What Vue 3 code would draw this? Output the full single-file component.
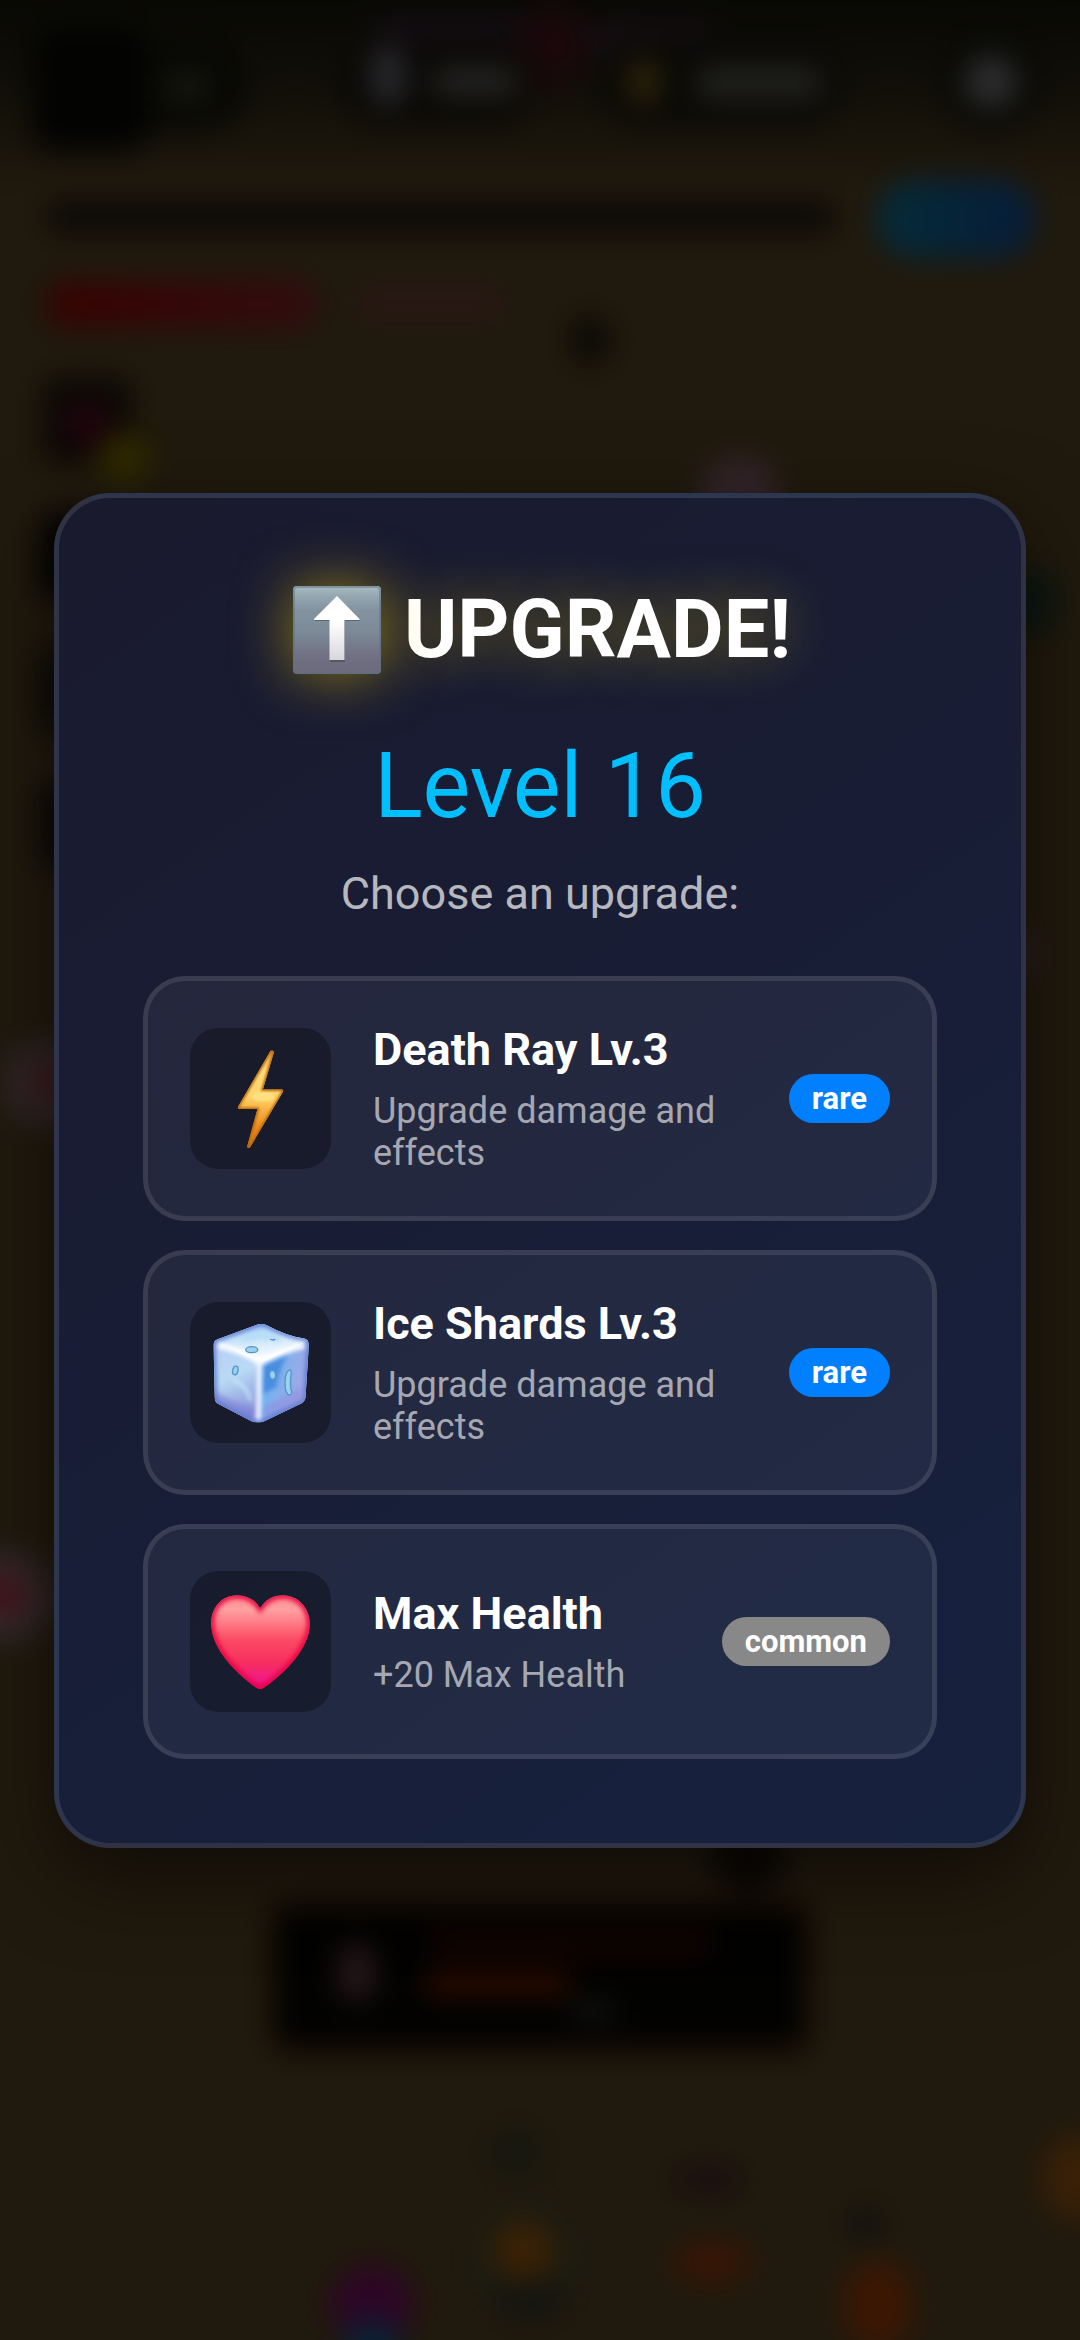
<script setup>
const level = 16

const upgrades = [
  { icon: 'bolt', name: 'Death Ray Lv.3', description: 'Upgrade damage and effects', rarity: 'rare' },
  { icon: 'ice', name: 'Ice Shards Lv.3', description: 'Upgrade damage and effects', rarity: 'rare' },
  { icon: 'heart', name: 'Max Health', description: '+20 Max Health', rarity: 'common' },
]
</script>

<template>
  <div class="screen">
    <!-- Dimmed, out-of-focus battlefield and HUD behind the dialog -->
    <svg class="battlefield" viewBox="0 0 1080 2340" preserveAspectRatio="xMidYMid slice" aria-hidden="true">
      <defs>
        <linearGradient id="topShade" x1="0" y1="0" x2="0" y2="1">
          <stop offset="0.24" stop-color="#080804" />
          <stop offset="0.6" stop-color="#110f08" />
          <stop offset="1" stop-color="#20190d" />
        </linearGradient>
        <linearGradient id="timer"><stop offset="0" stop-color="#052b38" /><stop offset="1" stop-color="#061c38" /></linearGradient>
        <linearGradient id="health"><stop offset="0" stop-color="#380101" /><stop offset="1" stop-color="#330b0e" /></linearGradient>
        <filter id="soft" filterUnits="userSpaceOnUse" x="-60" y="-60" width="1200" height="2460" color-interpolation-filters="sRGB"><feGaussianBlur stdDeviation="14" /></filter>
      </defs>
      <g filter="url(#soft)">
        <rect x="-60" y="-60" width="1200" height="2460" fill="#20190d" />
        <rect x="-60" y="-60" width="1200" height="250" fill="url(#topShade)" />
        <rect x="375" y="18" width="150" height="60" fill="#150d15" />
        <rect x="590" y="20" width="120" height="40" fill="#150e12" />
        <ellipse cx="552" cy="45" rx="36" ry="42" fill="#1a080b" />
        <rect x="90" y="38" width="158" height="94" rx="46" fill="#080804" />
        <rect x="32" y="26" width="116" height="126" rx="22" fill="#030302" />
        <rect x="168" y="74" width="38" height="26" fill="#181813" />
        <rect x="340" y="38" width="196" height="88" rx="44" fill="#0a0805" />
        <ellipse cx="388" cy="76" rx="20" ry="32" fill="#26262a" />
        <rect x="434" y="66" width="82" height="32" fill="#222220" />
        <rect x="598" y="38" width="246" height="88" rx="44" fill="#0a0906" />
        <ellipse cx="644" cy="82" rx="17" ry="23" fill="#2e240b" />
        <rect x="698" y="66" width="122" height="34" fill="#20201c" />
        <circle cx="991" cy="82" r="50" fill="#090906" />
        <circle cx="991" cy="82" r="27" fill="#2c2c2d" />
        <rect x="46" y="200" width="790" height="34" rx="16" fill="#0c0a06" />
        <rect x="876" y="180" width="160" height="78" rx="38" fill="url(#timer)" />
        <rect x="48" y="282" width="266" height="44" rx="14" fill="url(#health)" />
        <rect x="362" y="286" width="136" height="32" fill="#291714" />
        <ellipse cx="590" cy="340" rx="20" ry="24" fill="#0a0a05" />
        <rect x="42" y="376" width="90" height="88" rx="20" fill="#0a0904" />
        <circle cx="86" cy="424" r="26" fill="#1d040d" />
        <circle cx="124" cy="458" r="26" fill="#2f2900" />
        <rect x="40" y="512" width="90" height="88" rx="20" fill="#040302" />
        <rect x="40" y="646" width="90" height="88" rx="20" fill="#0b0b06" />
        <rect x="40" y="782" width="90" height="88" rx="20" fill="#0a0908" />
        <circle cx="740" cy="496" r="40" fill="#332429" />
        <ellipse cx="1032" cy="602" rx="26" ry="34" fill="#0c1710" />
        <circle cx="1008" cy="952" r="30" fill="#2d1d1d" />
        <circle cx="45" cy="1083" r="44" fill="#302427" />
        <circle cx="50" cy="1081" r="16" fill="#3c1414" />
        <circle cx="5" cy="1597" r="46" fill="#34282c" />
        <circle cx="5" cy="1595" r="20" fill="#471118" />
        <ellipse cx="748" cy="1858" rx="38" ry="34" fill="#0b0704" />
        <rect x="270" y="1898" width="542" height="156" rx="20" fill="#1a0b03" />
        <rect x="276" y="1908" width="528" height="138" rx="14" fill="#020201" />
        <ellipse cx="357" cy="1972" rx="20" ry="30" fill="#26171a" />
        <rect x="430" y="1932" width="280" height="24" fill="#140500" />
        <rect x="426" y="1972" width="144" height="24" fill="#2c0b00" />
        <rect x="574" y="2002" width="40" height="18" fill="#141414" />
        <ellipse cx="515" cy="2152" rx="26" ry="24" fill="#15180f" />
        <ellipse cx="526" cy="2258" rx="58" ry="62" fill="#1b1b11" />
        <ellipse cx="530" cy="2300" rx="36" ry="18" fill="#131410" />
        <ellipse cx="524" cy="2250" rx="32" ry="30" fill="#3a2105" />
        <ellipse cx="708" cy="2180" rx="36" ry="14" fill="#190e10" />
        <ellipse cx="712" cy="2262" rx="38" ry="19" fill="#3a1504" />
        <ellipse cx="866" cy="2224" rx="18" ry="14" fill="#0f1110" />
        <ellipse cx="878" cy="2305" rx="34" ry="46" fill="#3b1703" />
        <ellipse cx="1078" cy="2178" rx="36" ry="42" fill="#392007" />
        <ellipse cx="372" cy="2306" rx="42" ry="42" fill="#2d0625" />
        <ellipse cx="372" cy="2344" rx="28" ry="26" fill="#0a2035" />
      </g>
    </svg>

    <main class="dialog" role="dialog" aria-labelledby="dialog-title">
      <h1 id="dialog-title" class="title">
        <svg class="title-icon" viewBox="0 0 96 96" aria-hidden="true">
          <defs>
            <linearGradient id="key" x1="0" y1="0" x2="0" y2="1">
              <stop offset="0" stop-color="#a9bcc3" />
              <stop offset="0.12" stop-color="#94a6b0" />
              <stop offset="0.28" stop-color="#82939f" />
              <stop offset="0.5" stop-color="#7d8b98" />
              <stop offset="0.82" stop-color="#716f82" />
              <stop offset="1" stop-color="#6b6b7d" />
            </linearGradient>
            <linearGradient id="arrow" x1="0" y1="0" x2="0" y2="1">
              <stop offset="0.4" stop-color="#ffffff" />
              <stop offset="1" stop-color="#d8d8dc" />
            </linearGradient>
          </defs>
          <rect x="4" y="4" width="88" height="88" rx="4" fill="url(#key)" />
          <rect x="5" y="5" width="86" height="86" rx="4" fill="none" stroke="#596f80" stroke-opacity="0.5" stroke-width="2" />
          <path d="M48 16 L71 39 H56 V80 H41 V39 H25 Z" fill="#3f4453" fill-opacity="0.55" />
          <path d="M48 14 L70.500 37 V38 H55.500 V78 H40.500 V38 H25 V37 Z" fill="url(#arrow)" />
        </svg>
        <span>UPGRADE!</span>
      </h1>
      <p class="level">Level {{ level }}</p>
      <p class="prompt">Choose an upgrade:</p>

      <div class="options">
        <button v-for="upgrade in upgrades" :key="upgrade.name" type="button" class="option">
          <span class="option-icon">
            <svg v-if="upgrade.icon === 'bolt'" viewBox="33 24 420 420" aria-hidden="true">
              <defs>
                <linearGradient id="boltFill" gradientUnits="userSpaceOnUse" x1="250" y1="90" x2="235" y2="383">
                  <stop offset="0" stop-color="#f5b04a" />
                  <stop offset="0.2" stop-color="#ffdb78" />
                  <stop offset="0.48" stop-color="#ffd369" />
                  <stop offset="0.64" stop-color="#f5a93a" />
                  <stop offset="0.8" stop-color="#e8861c" />
                  <stop offset="1" stop-color="#d8790f" />
                </linearGradient>
                <clipPath id="boltClip"><path d="M273 92 Q281 88 283 96 L250 207 H307 Q313 208 310 214 L213 378 Q207 386 203 378 L234 265 H179 Q173 264 177 257 Z" /></clipPath>
                <filter id="boltSoft" color-interpolation-filters="sRGB"><feGaussianBlur stdDeviation="3" /></filter>
              </defs>
              <g clip-path="url(#boltClip)">
                <rect x="170" y="80" width="150" height="310" fill="url(#boltFill)" />
                <ellipse cx="250" cy="228" rx="34" ry="15" fill="#ffe68c" fill-opacity="0.7" filter="url(#boltSoft)" />
                <path d="M273 92 Q281 88 283 96 L250 207 H307 Q313 208 310 214 L213 378 Q207 386 203 378 L234 265 H179 Q173 264 177 257 Z" fill="none" stroke="#b9680a" stroke-width="9" filter="url(#boltSoft)" />
              </g>
            </svg>

            <svg v-else-if="upgrade.icon === 'ice'" viewBox="33 36 420 420" aria-hidden="true">
              <defs>
                <linearGradient id="iceTop" x1="0" y1="0" x2="0.3" y2="1">
                  <stop offset="0" stop-color="#8fc0f2" />
                  <stop offset="0.45" stop-color="#c4e2fa" />
                  <stop offset="1" stop-color="#ffffff" />
                </linearGradient>
                <linearGradient id="iceLeft" x1="0" y1="0" x2="0.3" y2="1">
                  <stop offset="0" stop-color="#b8cdf8" />
                  <stop offset="0.5" stop-color="#b9daf4" />
                  <stop offset="1" stop-color="#8892dc" />
                </linearGradient>
                <linearGradient id="iceRight" x1="0" y1="0" x2="1" y2="0.4">
                  <stop offset="0" stop-color="#5fa4ea" />
                  <stop offset="0.4" stop-color="#79b1ee" />
                  <stop offset="1" stop-color="#a5a8e6" />
                </linearGradient>
                <clipPath id="iceClip"><path d="M228 105 Q245 98 262 105 Q320 137 374 145 Q387 149 387 164 L377 320 Q376 332 364 338 L254 391 Q235 399 216 391 L118 340 Q107 334 107 322 L103 165 Q103 152 115 147 Z" /></clipPath>
                <filter id="iceSoft" x="-30%" y="-30%" width="160%" height="160%" color-interpolation-filters="sRGB"><feGaussianBlur stdDeviation="7" /></filter>
              </defs>
              <g clip-path="url(#iceClip)">
                <rect x="98" y="96" width="294" height="304" fill="#a9cdf4" />
                <path d="M245 98 L390 150 L244 218 L100 152 Z" fill="url(#iceTop)" />
                <path d="M98 155 L244 215 L236 400 L98 340 Z" fill="url(#iceLeft)" />
                <path d="M244 218 L390 155 L380 340 L236 400 Z" fill="url(#iceRight)" />
                <g filter="url(#iceSoft)">
                  <path d="M250 225 L325 192 Q300 230 290 290 L250 310 Z" fill="#2f7bd8" fill-opacity="0.65" />
                  <path d="M250 350 L365 290 V330 L250 390 Z" fill="#8f8fe0" fill-opacity="0.6" />
                  <path d="M110 305 L235 365 V390 L110 335 Z" fill="#7d7fd6" fill-opacity="0.6" />
                  <path d="M160 270 Q200 280 214 330" fill="none" stroke="#cdeef9" stroke-width="10" stroke-opacity="0.8" />
                  <path d="M115 165 Q200 185 242 218 Q300 185 375 165" fill="none" stroke="#ffffff" stroke-width="17" />
                  <path d="M242 216 L236 390" fill="none" stroke="#f2f7ff" stroke-width="15" />
                  <path d="M190 150 Q240 125 300 150" fill="none" stroke="#b2dcf5" stroke-width="12" />
                  <path d="M228 105 Q245 98 262 105 Q320 137 374 145 Q387 149 387 164 L377 320 Q376 332 364 338 L254 391 Q235 399 216 391 L118 340 Q107 334 107 322 L103 165 Q103 152 115 147 Z" fill="none" stroke="#5a78d0" stroke-width="13" />
                </g>
              </g>
              <g fill="#9ad0f0" stroke="#5596c8" stroke-width="4">
                <ellipse cx="217" cy="178" rx="18" ry="9" />
                <ellipse cx="168" cy="240" rx="8" ry="13" transform="rotate(12 168 240)" />
                <ellipse cx="279" cy="253" rx="9" ry="13" transform="rotate(-8 279 253)" />
                <path d="M332 238 Q322 238 317 260 Q313 300 324 311 Q334 316 336 304 Q329 285 335 246 Z" />
                <path d="M272 146 Q280 152 287 146" fill="none" />
              </g>
            </svg>

            <svg v-else viewBox="33 30 420 420" aria-hidden="true">
              <defs>
                <linearGradient id="heartFill" x1="0" y1="0" x2="0" y2="1">
                  <stop offset="0" stop-color="#ff8c8e" />
                  <stop offset="0.16" stop-color="#ffa0a2" />
                  <stop offset="0.32" stop-color="#ff7580" />
                  <stop offset="0.48" stop-color="#fb4964" />
                  <stop offset="0.72" stop-color="#f72e60" />
                  <stop offset="0.9" stop-color="#f01a86" />
                  <stop offset="1" stop-color="#e80070" />
                </linearGradient>
                <clipPath id="heartClip"><path d="M242 141 Q218 102 172 102 C126 103 96 140 96 187 C97 260 165 330 231 378 Q242 386 253 378 C320 330 389 260 390 187 C389 140 356 103 311 102 Q266 102 242 141 Z" /></clipPath>
                <filter id="heartSoft" color-interpolation-filters="sRGB"><feGaussianBlur stdDeviation="8" /></filter>
              </defs>
              <g clip-path="url(#heartClip)">
                <rect x="94" y="100" width="298" height="284" fill="url(#heartFill)" />
                <path d="M242 141 Q218 102 172 102 C126 103 96 140 96 187 C97 260 165 330 231 378 Q242 386 253 378 C320 330 389 260 390 187 C389 140 356 103 311 102 Q266 102 242 141 Z" fill="none" stroke="#e8003f" stroke-width="18" filter="url(#heartSoft)" />
              </g>
            </svg>
          </span>
          <span class="option-text">
            <span class="option-name">{{ upgrade.name }}</span>
            <span class="option-description">{{ upgrade.description }}</span>
          </span>
          <span class="rarity" :class="upgrade.rarity">{{ upgrade.rarity }}</span>
        </button>
      </div>
    </main>
  </div>
</template>

<style>
body {
  margin: 0;
  background: #20190d;
}
</style>

<style scoped>
.screen {
  position: relative;
  display: flex;
  align-items: center;
  justify-content: center;
  min-height: 100vh;
  overflow: hidden;
  font-family: Roboto, "Noto Sans", sans-serif;
  color: #fff;
}

.battlefield {
  position: absolute;
  inset: 0;
  width: 100%;
  height: 100%;
}

.dialog {
  position: relative;
  box-sizing: border-box;
  width: 90%;
  padding: 84px;
  border: 5px solid rgba(255, 255, 255, 0.1);
  border-radius: 56px;
  background: linear-gradient(145deg, #1a1a2e, #16213e);
  box-shadow: 0 28px 84px rgba(0, 0, 0, 0.5);
  text-align: center;
}

.title {
  display: flex;
  align-items: center;
  justify-content: center;
  gap: 19px;
  margin: 0 0 56px;
  font-size: 81px;
  font-weight: 700;
  line-height: 95px;
  text-shadow: 0 0 56px rgba(255, 215, 0, 0.4);
}

.title-icon {
  flex: none;
  width: 96px;
  height: 96px;
  filter: drop-shadow(0 0 28px rgba(255, 215, 0, 0.5));
}

.level {
  margin: 0 0 28px;
  font-size: 90px;
  line-height: 105px;
  color: #00bfff;
}

.prompt {
  margin: 0 0 56px;
  font-size: 45px;
  line-height: 53px;
  color: rgba(255, 255, 255, 0.7);
}

.options {
  display: flex;
  flex-direction: column;
  gap: 29px;
}

.option {
  display: flex;
  align-items: center;
  gap: 42px;
  width: 100%;
  padding: 42px;
  border: 5px solid rgba(255, 255, 255, 0.1);
  border-radius: 42px;
  background: rgba(255, 255, 255, 0.05);
  color: inherit;
  font: inherit;
  text-align: left;
  cursor: pointer;
}

.option-icon {
  flex: none;
  width: 141px;
  height: 141px;
  border-radius: 28px;
  background: rgba(0, 0, 0, 0.3);
}

.option-icon svg {
  display: block;
  width: 100%;
  height: 100%;
}

.option-text {
  display: flex;
  flex: 1;
  flex-direction: column;
  gap: 14px;
  min-width: 0;
}

.option-name {
  font-size: 45px;
  font-weight: 700;
  line-height: 53px;
}

.option-description {
  font-size: 36px;
  line-height: 42px;
  color: rgba(255, 255, 255, 0.6);
}

.rarity {
  flex: none;
  padding: 6px 23px;
  border-radius: 28px;
  font-size: 31px;
  font-weight: 700;
  line-height: 37px;
}

.rare {
  background: #0080ff;
}

.common {
  background: #888;
}
</style>
